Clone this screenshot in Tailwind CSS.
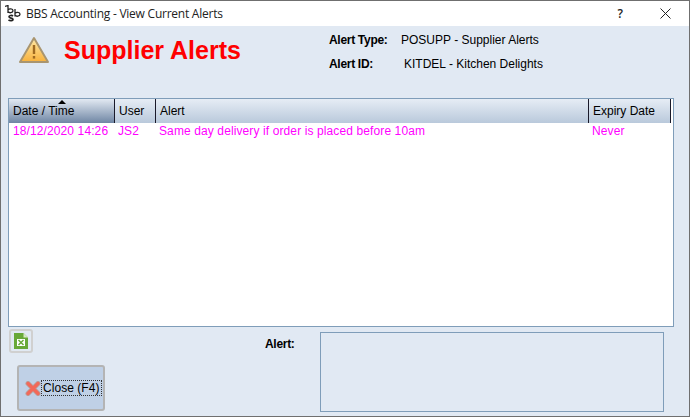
<!DOCTYPE html>
<html><head><meta charset="utf-8"><script src="https://cdn.jsdelivr.net/npm/@tailwindcss/browser@4"></script></head>
<body class="m-0">
<div class="w-[690px] h-[417px] overflow-hidden flex flex-col bg-[#e1e9f3] border-t border-x border-[#6f6f6f] border-b border-b-[#6f6f6f] font-['Liberation_Sans',sans-serif] text-black text-[12px]">
  <div class="h-[25px] shrink-0 bg-white flex items-center pl-[4px] font-['Open_Sans',sans-serif]">
    <svg class="w-[16px] h-[17px] shrink-0" viewBox="0 0 16 17" fill="none" stroke="#222" stroke-width="1.3"><path d="M0 1.500 L3 .5 V8M3 5c1-1.500 5-1.500 5 .8s-4 2.500-5 .8"/><path d="M10 4V11.500M10 8.500c1-1.500 5-1.500 5 .8s-4 2.500-5 .8"/><path d="M8 11c-1-.8-4-.8-4 .8s4 1 4 2.600-3 1.600-4.500.6" stroke-width="1.700"/></svg>
    <span class="ml-[5px] text-[12px] tracking-[-0.24px] text-[#222]">BBS Accounting - View Current Alerts</span>
    <span class="ml-auto mr-[37px] text-[12px] font-semibold text-[#222]">?</span>
    <svg class="w-[11px] h-[11px] mr-[18px]" viewBox="0 0 11 11" stroke="#222" stroke-width="1"><path d="M.5 .5L10.500 10.500M10.500 .5L.5 10.500"/></svg>
  </div>
  <div class="h-[72px] shrink-0 relative flex">
    <svg class="absolute left-[17px] top-[10px] w-[32px] h-[28px]" viewBox="0 0 32 28"><defs><linearGradient id="w" x1="0" y1="0" x2="0" y2="1"><stop offset="0" stop-color="#ffe9a8"/><stop offset="1" stop-color="#f7b13c"/></linearGradient></defs><path d="M16 2 L30 26 H2 Z" fill="url(#w)" stroke="#a9956f" stroke-width="2" stroke-linejoin="round"/><rect x="14.800" y="9" width="2.400" height="9" fill="#a06a20"/><rect x="14.800" y="20" width="2.400" height="2.600" fill="#a06a20"/></svg>
    <div class="ml-[63px] mt-[10px] text-[25px] leading-[28px] font-bold text-[#ff0000]">Supplier Alerts</div>
    <div class="absolute left-[328px] top-[7px] leading-[14px] flex flex-col gap-[10px]">
      <div class="flex"><b class="w-[72px] tracking-[-0.3px]">Alert Type:</b><span>POSUPP - Supplier Alerts</span></div>
      <div class="flex"><b class="w-[75px] tracking-[-0.3px]">Alert ID:</b><span>KITDEL - Kitchen Delights</span></div>
    </div>
  </div>
  <div class="ml-[7px] w-[666px] h-[229px] shrink-0 border border-[#7f9db9] bg-white flex flex-col">
    <div class="h-[24px] shrink-0 flex leading-[24px]">
      <div class="w-[106px] relative pl-[4px] border-r border-[#1a1a2a] bg-[linear-gradient(#e2e9f2,#6f86a4)]">Date / Time<span class="absolute left-[49px] top-[1px] w-0 h-0 border-x-[4px] border-x-transparent border-b-[4px] border-b-black"></span></div>
      <div class="w-[41px] pl-[4px] border-r border-[#1a1a2a] bg-[linear-gradient(#e6edf5,#b9c9db)]">User</div>
      <div class="w-[433px] pl-[4px] border-r border-[#1a1a2a] bg-[linear-gradient(#e6edf5,#b9c9db)]">Alert</div>
      <div class="w-[82px] pl-[4px] border-r border-[#1a1a2a] bg-[linear-gradient(#e6edf5,#b9c9db)]">Expiry Date</div>
    </div>
    <div class="flex text-[#ff00ff] leading-[15px] pt-[1px] tracking-[0.11px]">
      <div class="w-[106px] pl-[4px] whitespace-nowrap">18/12/2020 14:26</div>
      <div class="w-[41px] pl-[3px]">JS2</div>
      <div class="w-[433px] pl-[3px]">Same day delivery if order is placed before 10am</div>
      <div class="w-[82px] pl-[3px]">Never</div>
    </div>
  </div>
  <div class="flex-1 relative flex">
    <div class="flex flex-col">
      <button class="ml-[8px] mt-[2px] w-[24px] h-[24px] rounded-[3px] border-2 border-[#d0d0d0] bg-[#e1e9f3] flex items-center justify-center">
        <svg class="w-[14px] h-[16px]" viewBox="0 0 14 16"><path d="M0 0H9.500L14 4.500V16H0Z" fill="#68a838"/><path d="M9.500 0V4.500H14Z" fill="#d6e8c4"/><path d="M3 6H11V13H3Z" fill="#fff"/><path d="M4.500 7L9.500 12M9.500 7L4.500 12" stroke="#68a838" stroke-width="1.500"/></svg>
      </button>
      <button class="ml-[16px] mt-[12px] w-[88px] h-[46px] rounded-[3px] border-2 border-[#b4b4b4] bg-[#bfd0e6] flex items-center pl-[6px]">
        <svg class="w-[16px] h-[15px] shrink-0" viewBox="0 0 16 15"><path d="M3 2.500L13 12.500M13 2.500L3 12.500" stroke="#b9a09c" stroke-width="5" stroke-linecap="round"/><path d="M3 2.500L13 12.500M13 2.500L3 12.500" stroke="#f2695a" stroke-width="3.400" stroke-linecap="round"/></svg>
        <span class="ml-[0px] border border-dotted border-[#333] px-[1px] leading-[14px] whitespace-nowrap tracking-[0.05px]">Close (F4)</span>
      </button>
    </div>
    <b class="absolute left-[264px] top-[10px] leading-[14px] tracking-[-0.3px]">Alert:</b>
    <div class="absolute left-[319px] top-[5px] w-[344px] h-[80px] border border-[#7f9db9]"></div>
  </div>
</div>
</body></html>
